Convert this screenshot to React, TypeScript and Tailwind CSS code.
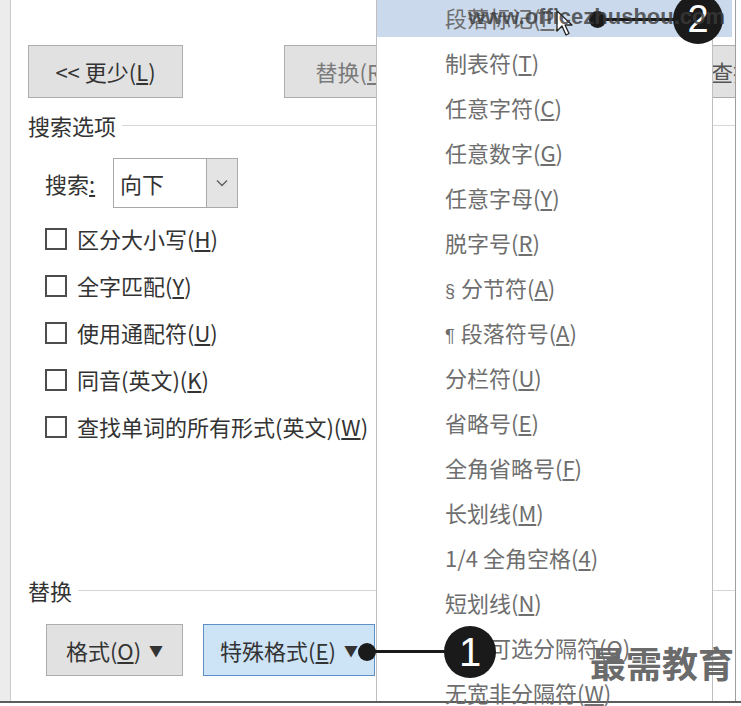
import React from 'react';

const font = { fontFamily: '"Noto Sans CJK SC", "Noto Sans", sans-serif' };
const latin = { fontFamily: '"Liberation Sans", Arial, sans-serif' };

const menuItems: [string, string, string, string][] = [
  ['', '段落标记(', 'P', ')'],
  ['', '制表符(', 'T', ')'],
  ['', '任意字符(', 'C', ')'],
  ['', '任意数字(', 'G', ')'],
  ['', '任意字母(', 'Y', ')'],
  ['', '脱字号(', 'R', ')'],
  ['§', '分节符(', 'A', ')'],
  ['¶', '段落符号(', 'A', ')'],
  ['', '分栏符(', 'U', ')'],
  ['', '省略号(', 'E', ')'],
  ['', '全角省略号(', 'F', ')'],
  ['', '长划线(', 'M', ')'],
  ['', '1/4 全角空格(', '4', ')'],
  ['', '短划线(', 'N', ')'],
  ['', '无宽可选分隔符(', 'O', ')'],
  ['', '无宽非分隔符(', 'W', ')'],
];

const options: [string, string][] = [
  ['区分大小写(', 'H'],
  ['全字匹配(', 'Y'],
  ['使用通配符(', 'U'],
  ['同音(英文)(', 'K'],
  ['查找单词的所有形式(英文)(', 'W'],
];

function Key({ k }: { k: string }) {
  return <span className="underline underline-offset-2">{k}</span>;
}

function SectionHeader({ title, className }: { title: string; className: string }) {
  return (
    <div className={`flex items-center h-[28px] ${className}`}>
      <span className="text-[22px] text-[#333] leading-none">{title}</span>
      <div className="flex-1 h-px bg-[#d6d6d6] ml-[6px]" />
    </div>
  );
}

export default function App() {
  return (
    <div className="w-[741px] h-[706px] bg-white overflow-hidden" style={font}>
      <div className="relative h-[703px] flex border-b-2 border-[#5c5c5c]">
        <div className="w-[11px] shrink-0 bg-[#ececec] border-r border-[#cccccc]" />

        <div className="w-[725px] shrink-0 border-r border-[#9f9f9f] overflow-hidden pl-[17px] pt-[45px]">
          <div className="flex items-start whitespace-nowrap">
            <div className="shrink-0 w-[155px] h-[53px] bg-[#e1e1e1] border border-[#adadad] flex items-center justify-center text-[22px] text-[#333]">
              &lt;&lt; 更少(<Key k="L" />)
            </div>
            <div className="shrink-0 ml-[101px] w-[136px] h-[53px] bg-[#e1e1e1] border border-[#adadad] flex items-center justify-center text-[22px] text-[#7a7a7a]">
              替换(<Key k="R" />)
            </div>
            <div className="shrink-0 ml-[20px] w-[130px] h-[53px] bg-[#e1e1e1] border border-[#adadad]" />
            <div className="shrink-0 ml-[120px] w-[180px] h-[53px] bg-[#e1e1e1] border border-[#adadad] flex items-center pl-[20px] text-[22px] text-[#555]">
              查找下一处(<Key k="F" />)
            </div>
          </div>

          <SectionHeader title="搜索选项" className="mt-[13px]" />

          <div className="mt-[19px] pl-[17px] flex items-center h-[50px]">
            <span className="w-[68px] text-[22px] text-[#333]">
              搜索<Key k=":" />
            </span>
            <div className="w-[125px] h-[50px] border border-[#a9a9a9] flex">
              <div className="flex-1 flex items-center pl-[6px] text-[22px] text-[#333]">向下</div>
              <div className="w-[31px] border-l border-[#a9a9a9] bg-[#e4e4e4] flex items-center justify-center">
                <svg width="12" height="8" viewBox="0 0 12 8" fill="none">
                  <path d="M1 1.5l5 5 5-5" stroke="#606060" strokeWidth="1.4" />
                </svg>
              </div>
            </div>
          </div>

          <div className="mt-[7px]">
            {options.map(([t, k]) => (
              <div key={t} className="h-[47px] pl-[17px] flex items-center whitespace-nowrap">
                <div className="w-[22px] h-[22px] border-2 border-[#4d4d4d] bg-white shrink-0" />
                <span className="ml-[10px] text-[22px] text-[#333]">
                  {t}
                  <Key k={k} />)
                </span>
              </div>
            ))}
          </div>

          <SectionHeader title="替换" className="mt-[126px]" />

          <div className="mt-[20px] pl-[18px] flex items-start whitespace-nowrap">
            <div className="w-[137px] h-[52px] bg-[#e1e1e1] border border-[#adadad] flex items-center justify-center gap-[8px] text-[22px] text-[#333]">
              <span>
                格式(<Key k="O" />)
              </span>
              <span className="text-[14px]">▼</span>
            </div>
            <div className="ml-[20px] w-[172px] h-[52px] bg-[#cde3f6] border border-[#5f8fc4] flex items-center justify-center gap-[8px] text-[22px] text-[#333]">
              <span>
                特殊格式(<Key k="E" />)
              </span>
              <span className="text-[14px]">▼</span>
            </div>
          </div>
        </div>

        {/* dropdown menu */}
        <div className="absolute left-[376px] top-[-5px] bottom-0 w-[337px] bg-white border-x border-[#bfbfbf]">
          {menuItems.map(([sym, a, k, b], i) => (
            <div key={i} className="relative h-[45px] flex items-center pl-[68px] whitespace-nowrap">
              {i === 0 && <div className="absolute left-0 top-0 bottom-[3px] right-[-20px] bg-[#cad9ec]" />}
              <span className="relative text-[22px] text-[#6e6e6e]">
                {sym && (
                  <span className="text-[18px] mr-[6px]" style={latin}>
                    {sym}
                  </span>
                )}
                {a}
                <Key k={k} />
                {b}
              </span>
            </div>
          ))}
        </div>

        {/* cursor */}
        <svg className="absolute left-[556px] top-[10px]" width="18" height="26" viewBox="0 0 18 26">
          <path d="M1 1v20l5-5 4 9 3-1.5-4-8.5h7z" fill="#fff" stroke="#222" strokeWidth="1.3" strokeLinejoin="round" />
        </svg>

        {/* callout 2 */}
        <div className="absolute left-[597px] top-[18px] w-[80px] h-[3px] bg-[#1a1a1a]" />
        <div className="absolute left-[589px] top-[11px] w-[17px] h-[17px] rounded-full bg-[#1a1a1a]" />
        <div className="absolute left-[673px] top-[-6px] w-[50px] h-[50px] rounded-full bg-[#1a1a1a] flex items-center justify-center text-white text-[38px] leading-none" style={latin}>
          2
        </div>

        {/* overlay watermark on first item */}
        <div
          className="absolute left-[468px] top-[3px] text-[22px] font-bold text-[#3a3a3a]/80 whitespace-nowrap leading-[28px]"
          style={latin}
        >
          www.officezhushou.com
        </div>

        {/* callout 1 */}
        <div className="absolute left-[367px] top-[650px] w-[80px] h-[3px] bg-[#1a1a1a]" />
        <div className="absolute left-[358px] top-[643px] w-[18px] h-[18px] rounded-full bg-[#1a1a1a]" />
        <div className="absolute left-[444px] top-[626px] w-[52px] h-[52px] rounded-full bg-[#1a1a1a] flex items-center justify-center text-white text-[40px] leading-none" style={latin}>
          1
        </div>

        {/* brand watermark */}
        <div className="absolute left-[590px] top-[644px] text-[36px] font-bold text-[#6b6b6b] leading-none whitespace-nowrap">
          最需教育
        </div>
      </div>
    </div>
  );
}
